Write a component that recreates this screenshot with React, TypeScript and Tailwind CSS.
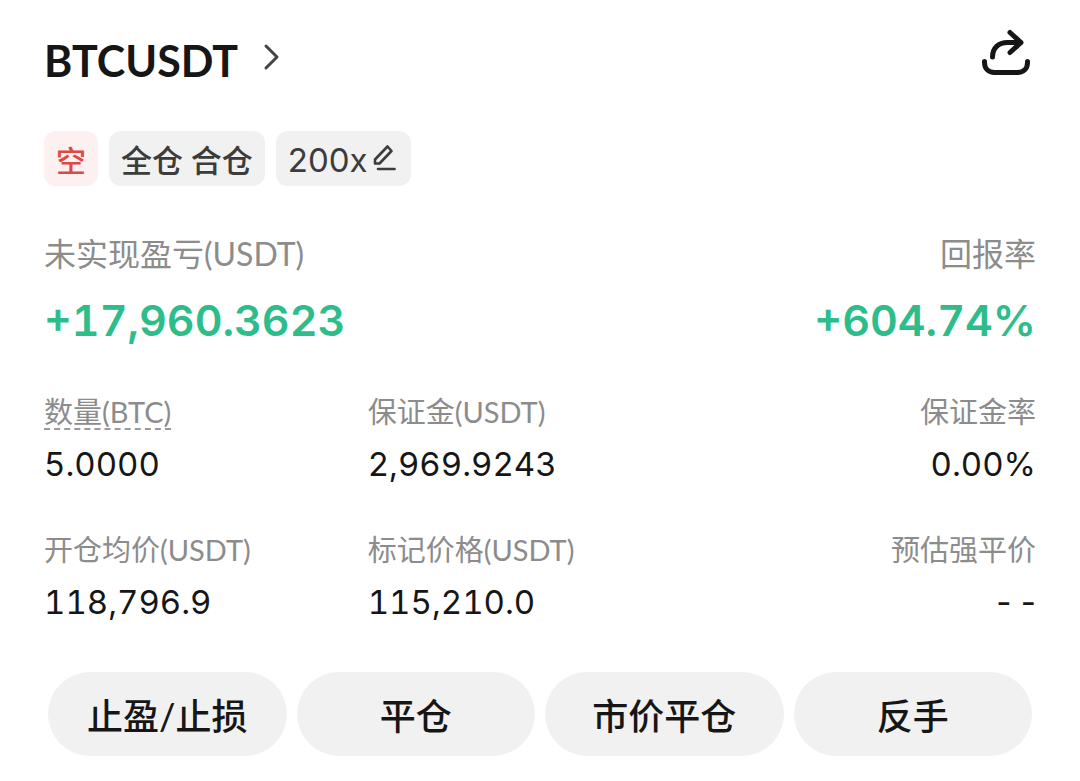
import clsx from "clsx";

type Stat = {
  label: string;
  value: string;
  dashed?: boolean;
  align?: "right";
};

const stats: Stat[] = [
  { label: "数量(BTC)", value: "5.0000", dashed: true },
  { label: "保证金(USDT)", value: "2,969.9243" },
  { label: "保证金率", value: "0.00%", align: "right" },
  { label: "开仓均价(USDT)", value: "118,796.9" },
  { label: "标记价格(USDT)", value: "115,210.0" },
  { label: "预估强平价", value: "- -", align: "right" },
];

const actions = ["止盈/止损", "平仓", "市价平仓", "反手"];

function ShareIcon() {
  return (
    <svg width="52" height="48" viewBox="0 0 52 48" fill="none" stroke="#161616" strokeWidth="5" strokeLinecap="round" strokeLinejoin="round">
      <path d="M4.500 32.500v1c0 6 4 10 10 10h23c6 0 10-4 10-10v-1" />
      <path d="M12.500 28c0-9 6-14.500 15-14.500h13" />
      <path d="M30 3.500l11 10L30 23.500" />
    </svg>
  );
}

function PencilIcon() {
  return (
    <svg width="27" height="30" viewBox="0 0 27 30" fill="none" stroke="#3c3c3c" strokeWidth="2.600" strokeLinecap="round" strokeLinejoin="round">
      <path d="M3 15.500L15.500 2.500l4 4.500L7.500 19.500H3z" />
      <path d="M6 25h16.500" />
    </svg>
  );
}

function StatItem({ label, value, dashed, align }: Stat) {
  return (
    <div className={clsx("flex flex-col gap-3", align === "right" ? "items-end" : "items-start")}>
      <dt
        className={clsx(
          "h-9 text-[29px] leading-9 text-[#8c8c8c]",
          dashed && "border-b-2 border-dashed border-[#9a9a9a]",
        )}
      >
        {label}
      </dt>
      <dd
        className={clsx(
          "font-[Inter,'Noto_Sans_CJK_SC',sans-serif] text-[33px] leading-11 text-[#161616]",
          value !== "- -" && "tabular-nums",
        )}
      >
        {value}
      </dd>
    </div>
  );
}

export default function App() {
  return (
    <main className="min-h-screen bg-white px-11 pt-[37px] pb-6 font-[Lato,'Noto_Sans_CJK_SC',sans-serif] text-[#161616]">
      <header className="flex items-start justify-between">
        <a href="#" className="flex items-center gap-6">
          <h1 className="text-[43px] leading-12 font-bold">BTCUSDT</h1>
          <svg className="mb-2" width="18" height="28" viewBox="0 0 18 28" fill="none" stroke="#444" strokeWidth="3" strokeLinecap="round" strokeLinejoin="round">
            <path d="M4 3l11 11L4 25" />
          </svg>
        </a>
        <button aria-label="分享" className="mr-1 -mt-2">
          <ShareIcon />
        </button>
      </header>

      <div className="mt-[46px] flex gap-[11px] text-[31px] leading-[51px] text-[#3c3c3c]">
        <span className="rounded-xl bg-[#fdf0f0] px-3 pt-1 text-[30px] font-medium text-[#dc4a45]">空</span>
        <span className="rounded-xl bg-[#f1f1f1] px-3 pt-1 font-medium">全仓 合仓</span>
        <button className="flex items-center gap-1 rounded-xl bg-[#f1f1f1] px-3 font-[Inter,sans-serif] text-[33px]">
          <span className="pt-1">200x</span>
          <PencilIcon />
        </button>
      </div>

      <dl className="mt-12 flex justify-between">
        <div>
          <dt className="text-[32px] leading-10 text-[#8c8c8c]">未实现盈亏(USDT)</dt>
          <dd className="mt-5 font-[Inter,sans-serif] text-[43px] leading-[52px] font-semibold text-[#2dbd8b] tabular-nums">
            +17,960.3623
          </dd>
        </div>
        <div className="text-right">
          <dt className="text-[32px] leading-10 text-[#8c8c8c]">回报率</dt>
          <dd className="mt-5 font-[Inter,sans-serif] text-[43px] leading-[52px] font-semibold text-[#2dbd8b] tabular-nums">
            +604.74%
          </dd>
        </div>
      </dl>

      <dl className="mt-12 grid grid-cols-[31fr_32fr_32fr] gap-y-[46px]">
        {stats.map((stat) => (
          <StatItem key={stat.label} {...stat} />
        ))}
      </dl>

      <div className="mx-1 mt-12 grid grid-cols-4 gap-[10px]">
        {actions.map((action) => (
          <button key={action} className="h-21 rounded-full bg-[#f1f1f1] pt-1 text-[36px] leading-12 font-medium">
            {action}
          </button>
        ))}
      </div>
    </main>
  );
}
